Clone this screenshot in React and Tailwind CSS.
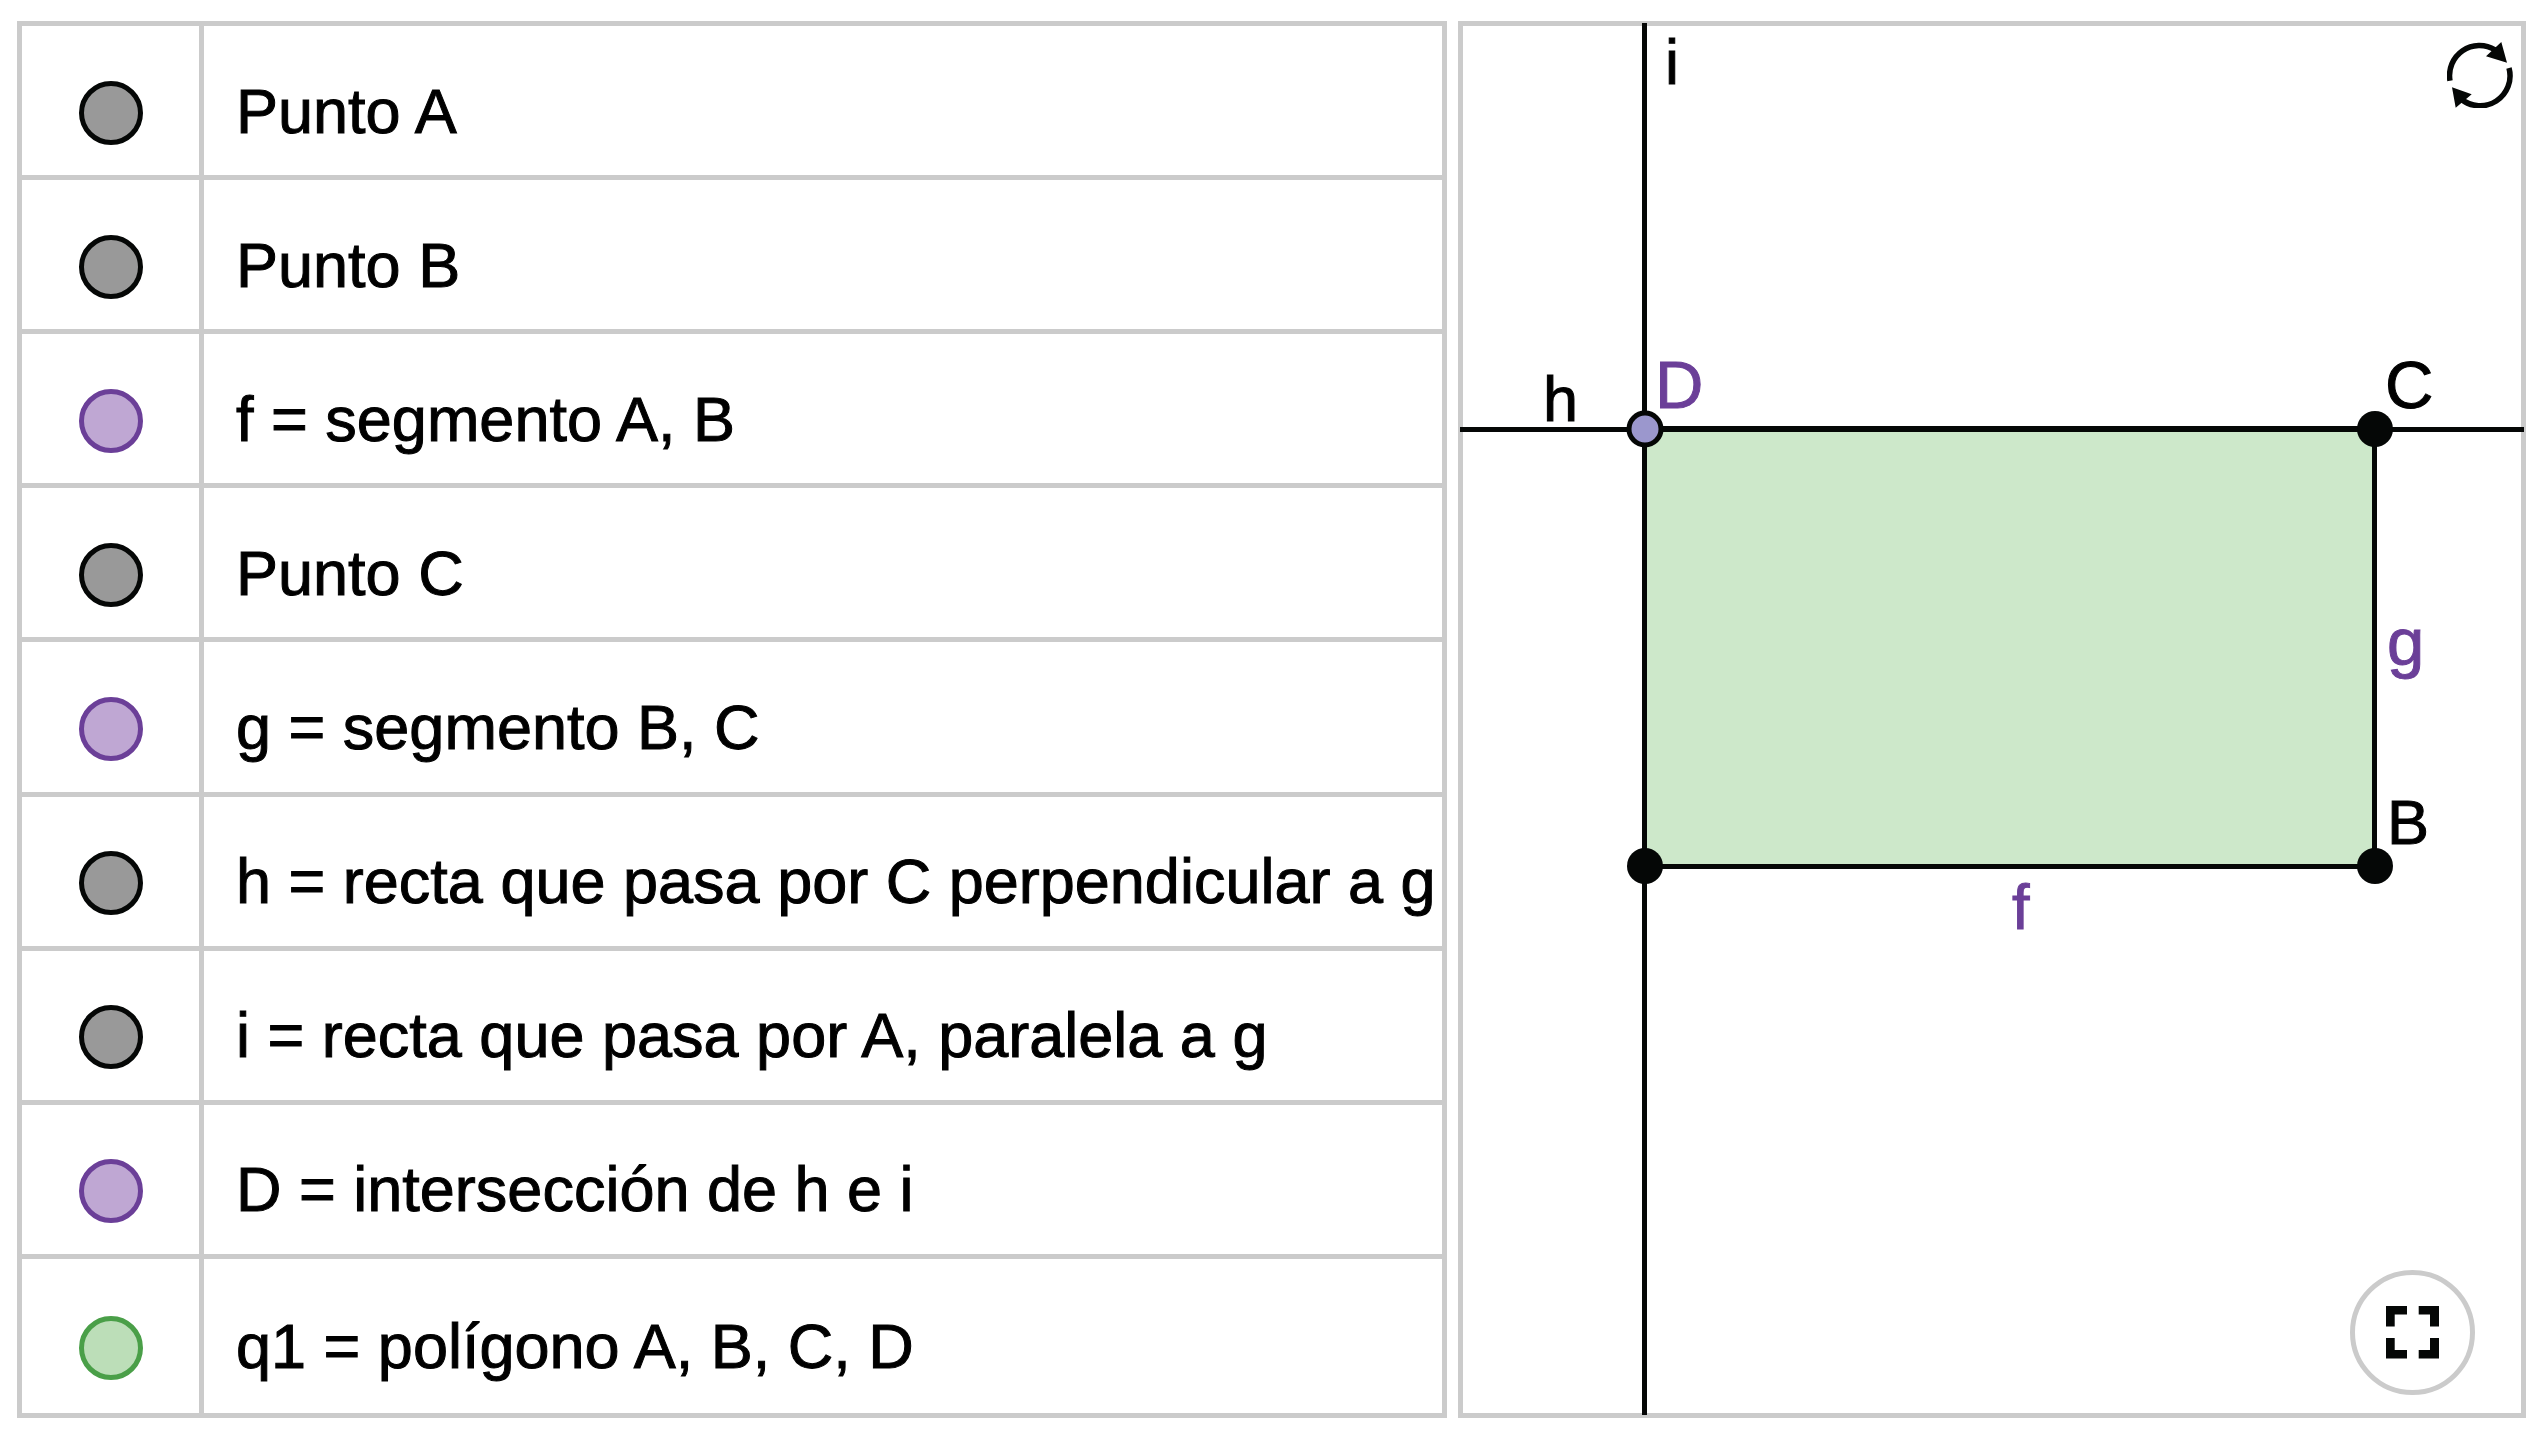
import React, { useState } from 'react';
import clsx from 'clsx';

const steps = [
    { id: 'A', text: 'Punto A', tone: 'gray' },
    { id: 'B', text: 'Punto B', tone: 'gray' },
    { id: 'f', text: 'f = segmento A, B', tone: 'purple' },
    { id: 'C', text: 'Punto C', tone: 'gray' },
    { id: 'g', text: 'g = segmento B, C', tone: 'purple' },
    { id: 'h', text: 'h = recta que pasa por C perpendicular a g', tone: 'gray' },
    { id: 'i', text: 'i = recta que pasa por A, paralela a g', tone: 'gray' },
    { id: 'D', text: 'D = intersección de h e i', tone: 'purple' },
    { id: 'q1', text: 'q1 = polígono A, B, C, D', tone: 'green' },
];

const tones = {
    gray: 'border-[#050706] bg-[#999999]',
    purple: 'border-[#6b3f98] bg-[#bfa7d3]',
    green: 'border-[#4a9f48] bg-[#bcdeb8]',
};

const StepList = ({ hidden, onToggle }) => (
    <table className="w-full h-full border-separate border-spacing-0">
        <tbody>
            {steps.map((step) => (
                <tr key={step.id} className="group h-[154px]">
                    <td className="w-[182px] border-r-[5px] border-b-[5px] group-last:border-b-0 border-[#cbcbcb] pt-6 align-middle">
                        <button
                            type="button"
                            aria-label={`Mostrar u ocultar ${step.id}`}
                            aria-pressed={!hidden[step.id]}
                            onClick={() => onToggle(step.id)}
                            className={clsx(
                                'block mx-auto size-16 rounded-full border-[5px]',
                                tones[step.tone],
                                hidden[step.id] && 'opacity-40'
                            )}
                        />
                    </td>
                    <td className="border-b-[5px] group-last:border-b-0 border-[#cbcbcb] pl-8 pt-5 align-middle whitespace-nowrap text-[63px] leading-[72px]">
                        {step.text}
                    </td>
                </tr>
            ))}
        </tbody>
    </table>
);

const Drawing = ({ hidden }) => (
    <svg
        viewBox="0 0 1058 1387"
        className="w-full h-full overflow-visible text-[63px]"
        role="img"
        aria-label="Rectángulo A, B, C, D"
    >
        {!hidden.q1 && <rect x="182" y="403" width="730" height="437" fill="#cde8ca" />}

        <g stroke="#050706" strokeWidth="5">
            {/* lines h and i run a little over the frame */}
            {!hidden.h && <line x1="-3" y1="403.5" x2="1061" y2="403.5" />}
            {!hidden.i && <line x1="181.5" y1="-3" x2="181.5" y2="1389" />}
            {!hidden.q1 && <line x1="182" y1="403" x2="912" y2="403" strokeWidth="6" />}
            {!hidden.f && <line x1="182" y1="840.5" x2="912" y2="840.5" />}
            {!hidden.g && <line x1="911.5" y1="403" x2="911.5" y2="840" />}
        </g>

        {!hidden.A && <circle cx="182" cy="840" r="18" fill="#050706" />}
        {!hidden.B && <circle cx="912" cy="840" r="18" fill="#050706" />}
        {!hidden.C && <circle cx="912" cy="403" r="18" fill="#050706" />}
        {!hidden.D && (
            <circle cx="182" cy="403" r="16" fill="#9b97cd" stroke="#050706" strokeWidth="5" />
        )}

        <g fill="#000000" stroke="#000000">
            {!hidden.i && <text x="202" y="58">i</text>}
            {!hidden.h && <text x="80" y="395">h</text>}
            {!hidden.B && <text x="924" y="818">B</text>}
            {!hidden.C && <text x="922" y="382" className="text-[67px]">C</text>}
        </g>
        <g fill="#6b3f98" stroke="#6b3f98">
            {!hidden.f && <text x="549" y="903">f</text>}
            {!hidden.D && <text x="192" y="382" className="text-[67px]">D</text>}
            {!hidden.g && <text x="924" y="639" className="text-[67px]">g</text>}
        </g>
    </svg>
);

const ResetIcon = () => (
    <svg viewBox="0 0 66 66" className="size-[66px]" fill="#050706">
        <path
            d="M3 38.7A30 30 0 0 1 48 7.8M62 26A30 30 0 0 1 14 57"
            fill="none"
            stroke="#050706"
            strokeWidth="5.5"
        />
        <path d="M54.3 0L60 20.7L39 14.3ZM5 45.3L24.7 52.3L8.7 65.7Z" />
    </svg>
);

const FullscreenIcon = () => (
    <svg viewBox="0 0 53 53" className="size-[53px]" fill="#050706">
        <path d="M0 0H21V8.5H8.7V20.5H0ZM32.7 0H53V20.5H44V8.5H32.7ZM0 32H8.7V44H21V52.5H0ZM44 32H53V52.5H32.7V44H44Z" />
    </svg>
);

const App = () => {
    const [hidden, setHidden] = useState({});

    const toggle = (id) => setHidden({ ...hidden, [id]: !hidden[id] });

    const toggleFullscreen = () => {
        if (document.fullscreenElement) {
            document.exitFullscreen();
        } else {
            document.documentElement.requestFullscreen();
        }
    };

    return (
        <main className="h-screen grid grid-cols-[1430fr_1068fr] grid-rows-1 gap-[11px] pt-[21px] pr-[15px] pb-4 pl-[17px] bg-white text-black font-['Liberation_Sans',Arial,sans-serif]">
            <section className="min-w-0 min-h-0 border-[5px] border-[#cbcbcb] [-webkit-text-stroke:1px_currentColor]">
                <StepList hidden={hidden} onToggle={toggle} />
            </section>

            <section className="relative min-w-0 min-h-0 border-[5px] border-[#cbcbcb]">
                <Drawing hidden={hidden} />
                <button
                    type="button"
                    aria-label="Reiniciar"
                    onClick={() => setHidden({})}
                    className="absolute top-4 right-2"
                >
                    <ResetIcon />
                </button>
                <button
                    type="button"
                    aria-label="Pantalla completa"
                    onClick={toggleFullscreen}
                    className="absolute bottom-[18px] right-[46px] size-[125px] flex items-center justify-center rounded-full border-[5px] border-[#cbcbcb] bg-white"
                >
                    <FullscreenIcon />
                </button>
            </section>
        </main>
    );
};

export default App;
